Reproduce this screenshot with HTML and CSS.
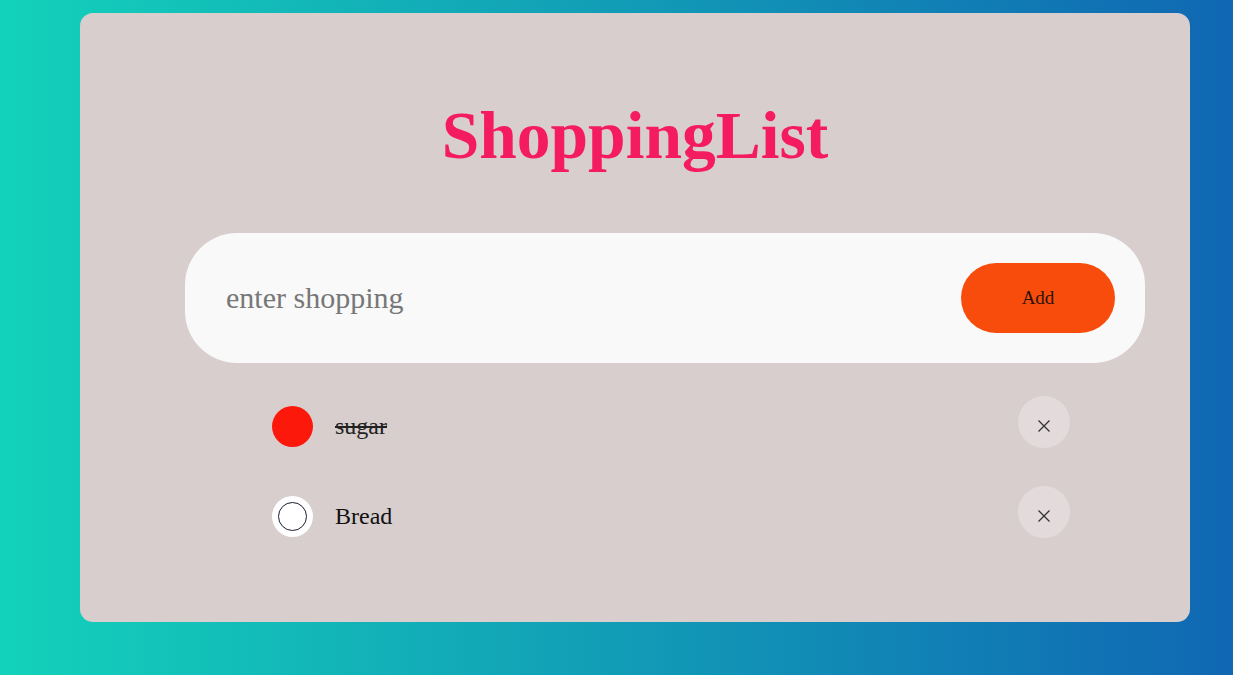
FILE: index.html
```html
<!DOCTYPE html>
<html>
<head>
<meta charset="utf-8">
<link rel="stylesheet" href="styles.css">
</head>
<body>
<main class="card">
  <h1 class="title">ShoppingList</h1>
  <form class="entry">
    <input class="entry-input" type="text" placeholder="enter shopping">
    <button class="add-btn" type="button">Add</button>
  </form>
  <ul class="list">
    <li class="item">
      <div class="item-label">
        <span class="check check-done"></span>
        <span class="item-text done">sugar</span>
      </div>
      <button class="remove" type="button">
        <svg width="14" height="14" viewBox="0 0 14 14"><path d="M1.5 1.5L12.5 12.5M12.5 1.5L1.5 12.5" stroke="#333" stroke-width="1.3" fill="none"/></svg>
      </button>
    </li>
    <li class="item">
      <div class="item-label">
        <span class="check"><span class="check-inner"></span></span>
        <span class="item-text">Bread</span>
      </div>
      <button class="remove" type="button">
        <svg width="14" height="14" viewBox="0 0 14 14"><path d="M1.5 1.5L12.5 12.5M12.5 1.5L1.5 12.5" stroke="#333" stroke-width="1.3" fill="none"/></svg>
      </button>
    </li>
  </ul>
</main>
</body>
</html>
```
FILE: styles.css
```css
html, body {
  margin: 0;
  padding: 0;
  height: 100%;
}
body {
  background: linear-gradient(to right, #13d2ba, #1067b3);
  font-family: "Liberation Serif", "Times New Roman", serif;
  padding-top: 13px;
  box-sizing: border-box;
}
.card {
  box-sizing: border-box;
  margin-left: 80px;
  width: 1110px;
  height: 609px;
  background: #d8cece;
  border-radius: 13px;
  padding: 86px 45px 0 105px;
}
.title {
  margin: 0 0 60px -60px;
  text-align: center;
  font-size: 67.5px;
  line-height: 74px;
  font-weight: bold;
  color: #f51b60;
}
.entry {
  display: flex;
  align-items: center;
  height: 130px;
  box-sizing: border-box;
  background: #f9f9f9;
  border-radius: 52px;
  padding: 0 30px 0 41px;
  margin: 0;
}
.entry-input {
  flex: 1;
  border: none;
  outline: none;
  background: transparent;
  font-family: "Liberation Serif", "Times New Roman", serif;
  font-size: 30px;
  padding: 0;
  color: #222;
}
.entry-input::placeholder {
  color: #777;
}
.add-btn {
  width: 154px;
  height: 70px;
  border: none;
  border-radius: 35px;
  background: #f84c0d;
  font-family: "Liberation Serif", "Times New Roman", serif;
  font-size: 19px;
  color: #2a1408;
}
.list {
  list-style: none;
  margin: 33px 75px 0 87px;
  padding: 0;
  display: flex;
  flex-direction: column;
  gap: 38px;
}
.item {
  display: flex;
  align-items: center;
  justify-content: space-between;
  height: 52px;
}
.item-label {
  display: flex;
  align-items: center;
  gap: 22px;
  margin-top: 9px;
}
.check {
  width: 41px;
  height: 41px;
  border-radius: 50%;
  background: #fff;
  display: flex;
  align-items: center;
  justify-content: center;
}
.check-done {
  background: #fc180a;
}
.check-inner {
  width: 27px;
  height: 27px;
  border-radius: 50%;
  border: 1px solid #1c1c30;
  background: #fff;
}
.item-text {
  font-size: 24px;
  color: #111;
}
.done {
  text-decoration: line-through;
  color: #222;
}
.remove {
  width: 52px;
  height: 52px;
  border-radius: 50%;
  border: none;
  background: #e3dbdb;
  display: flex;
  align-items: center;
  justify-content: center;
  padding: 0;
  padding-top: 8px;
}
```
